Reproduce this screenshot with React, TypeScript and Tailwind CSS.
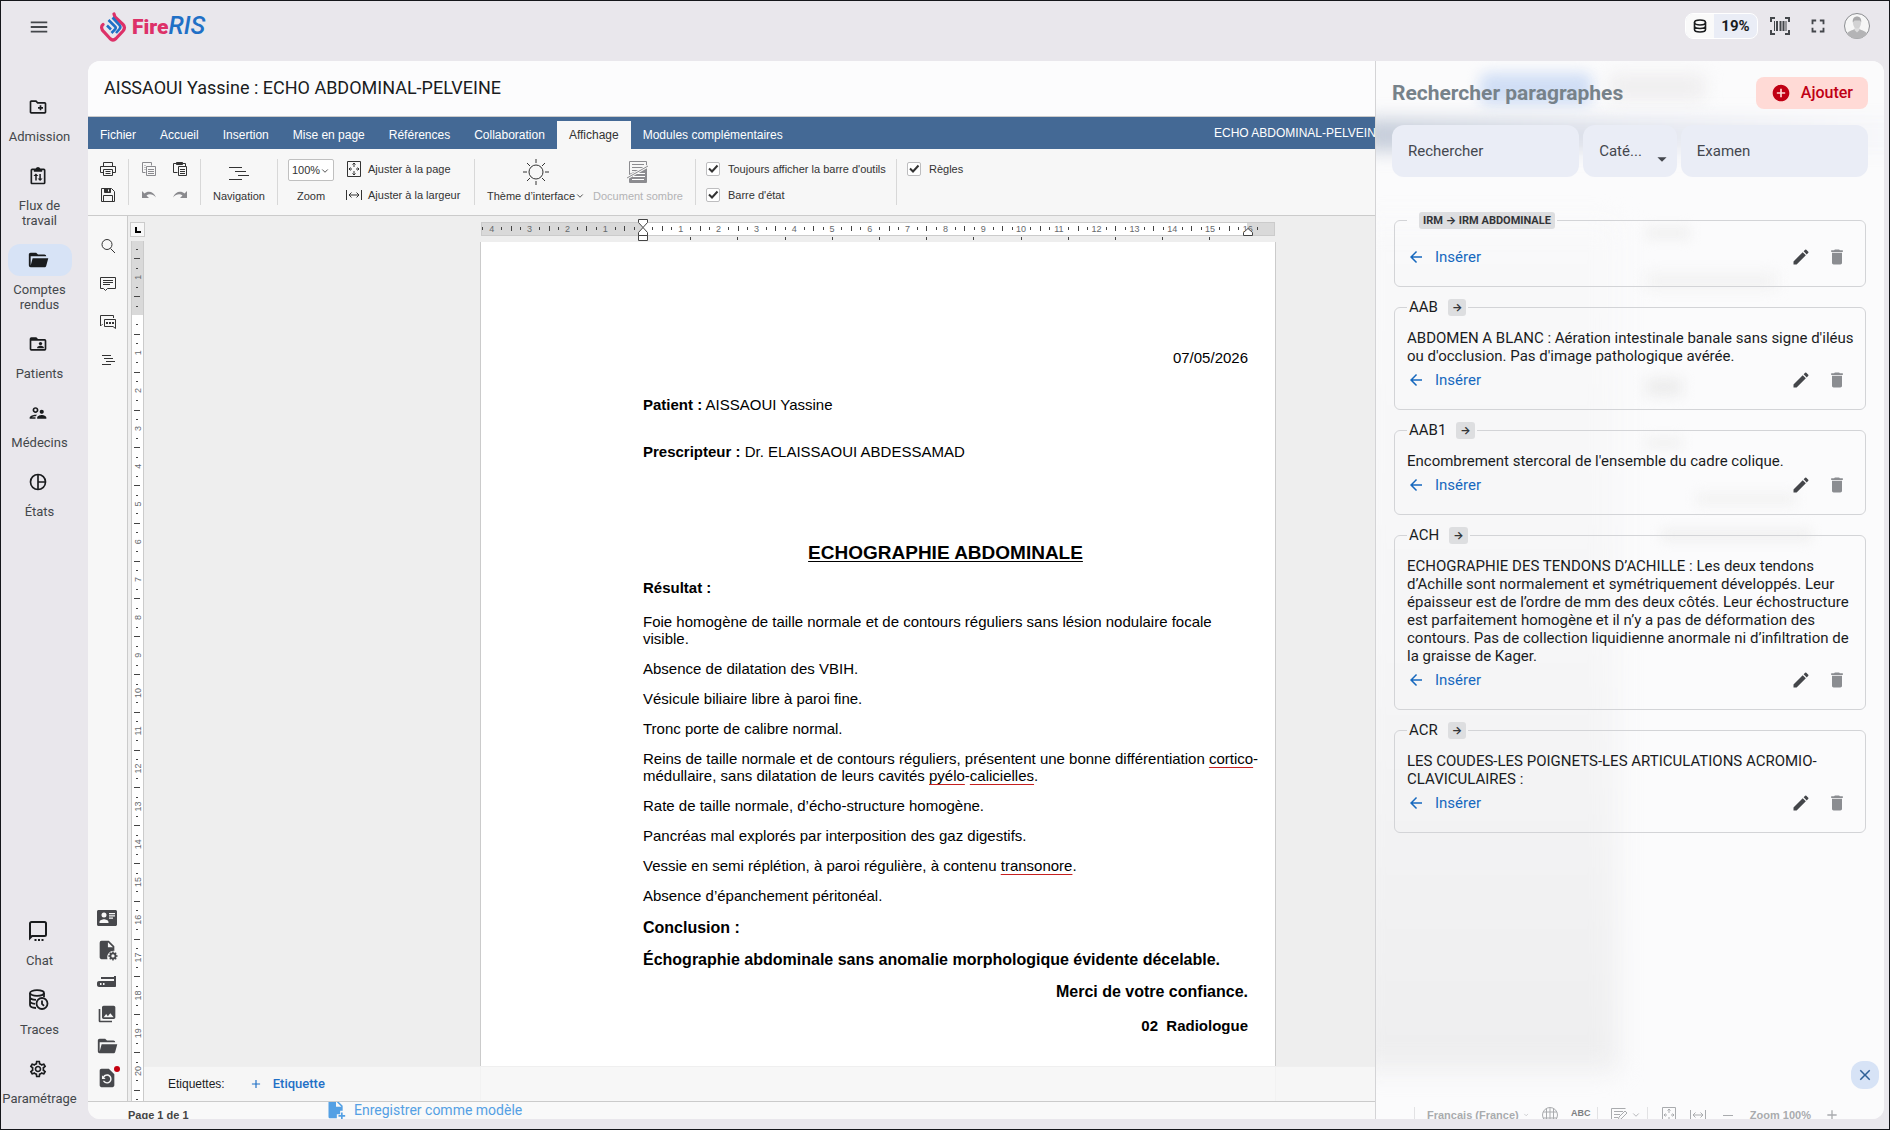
import type { ReactNode } from 'react';
import {
  MdAdd,
  MdAddCircle,
  MdArrowBack,
  MdArrowDropDown,
  MdClose,
  MdDelete,
  MdEdit,
  MdFullscreen,
  MdMenu,
  MdOutlineCreateNewFolder,
  MdOutlineSettings,
  MdOutlineSupervisorAccount,
  MdPhotoLibrary,
  MdRestorePage,
} from 'react-icons/md';
import { LuChevronDown } from 'react-icons/lu';

const CM = 37.8;

/* ---------- icons ---------- */

interface SvgProps {
  children: ReactNode;
  className?: string;
  viewBox?: string;
}

// thin line icons, drawn on whole pixels
function Line({ children, className = 'size-4', viewBox = '0 0 16 16' }: SvgProps) {
  return (
    <svg viewBox={viewBox} className={className} fill="none" stroke="currentColor" aria-hidden="true">
      {children}
    </svg>
  );
}

function Solid({ children, className = 'size-5', viewBox = '0 0 24 24' }: SvgProps) {
  return (
    <svg viewBox={viewBox} className={className} fill="currentColor" aria-hidden="true">
      {children}
    </svg>
  );
}

const ClipboardFlow = () => (
  <Solid>
    <path d="M19 3h-4.2a3 3 0 0 0-5.6 0H5a2 2 0 0 0-2 2v15c0 1.100.9 2 2 2h14a2 2 0 0 0 2-2V5a2 2 0 0 0-2-2zm0 17H5V5h2v2h10V5h2z" />
    <path d="M9.500 9L6.500 12h2.200v5.500h1.800V12h2zM14.500 18l3-3h-2.100V9.500h-1.800V15h-2.100z" />
  </Solid>
);

const FolderOpenFilled = () => (
  <Solid className="size-[22px]">
    <path d="M19 20H4a2 2 0 0 1-2-2V6c0-1.110.890-2 2-2h6l2 2h7a2 2 0 0 1 2 2H4v10l2.140-8h17.070l-2.280 8.500c-.23.870-1.010 1.500-1.930 1.500z" />
  </Solid>
);

const FolderPerson = () => (
  <Solid>
    <path d="M20 6h-8l-2-2H4a2 2 0 0 0-2 2v12a2 2 0 0 0 2 2h16a2 2 0 0 0 2-2V8a2 2 0 0 0-2-2zm0 12H4V8h16z" />
    <circle cx="15" cy="11.500" r="2" />
    <path d="M11 17v-1c0-1.300 2.700-2 4-2s4 .7 4 2v1z" />
  </Solid>
);

const PieOutline = () => (
  <Line viewBox="0 0 24 24" className="size-5">
    <g strokeWidth="2">
      <circle cx="12" cy="12" r="9" />
      <path d="M12 3v18M12 12h9" />
    </g>
  </Line>
);

const ChatDots = () => (
  <Line viewBox="0 0 24 24" className="size-6">
    <path d="M4 19V4.500C4 3.700 4.700 3 5.500 3h13c.8 0 1.500.7 1.500 1.500v11c0 .8-.7 1.500-1.500 1.500H6z" strokeWidth="2" />
    <path d="M8.500 21h2M12 21h2M15.500 21h2" strokeWidth="2" />
  </Line>
);

const DatabaseClock = () => (
  <Line viewBox="0 0 24 24" className="size-6">
    <g strokeWidth="1.800">
      <ellipse cx="11" cy="5" rx="7" ry="2.800" />
      <path d="M4 5v12c0 1.500 2.500 2.800 6 3M18 5v4M4 9c0 1.500 2.500 2.700 6 2.900M4 13c0 1.500 2 2.500 5 2.800" />
      <circle cx="16" cy="15.500" r="5.500" />
      <path d="M16 12.500v3.300l2 2" />
    </g>
  </Line>
);

const Database = () => (
  <Line className="size-4">
    <g strokeWidth="1.600">
      <ellipse cx="8" cy="4.500" rx="5.500" ry="2.500" />
      <path d="M2.500 4.500v7c0 1.400 2.500 2.500 5.500 2.500s5.500-1.100 5.500-2.500v-7M2.500 8c0 1.400 2.500 2.500 5.500 2.500s5.500-1.100 5.500-2.500" />
    </g>
  </Line>
);

const BarcodeScan = () => (
  <Line viewBox="0 0 20 18" className="h-[18px] w-5">
    <path d="M1 5V1h4M15 1h4v4M19 13v4h-4M5 17H1v-4" strokeWidth="2" />
    <path d="M4.500 4v10M16 4v10" strokeWidth="1" />
    <path d="M7 4v10M10.500 4v10M13.500 4v10" strokeWidth="2" />
  </Line>
);

const ContactCard = () => (
  <Solid viewBox="0 0 20 16" className="h-4 w-5">
    <path
      fillRule="evenodd"
      d="M1.500 0h17C19.300 0 20 .7 20 1.500v13c0 .8-.7 1.500-1.500 1.500h-17C.7 16 0 15.300 0 14.500v-13C0 .7.7 0 1.500 0zM7 2.500a2.500 2.500 0 1 0 0 5 2.500 2.500 0 0 0 0-5zM2.500 13h9v-1c0-1.800-3-2.800-4.500-2.800S2.500 10.200 2.500 12zM12 3v1.200h6V3zm0 2.300v1.200h6V5.300zm0 2.300v1.200h4V7.600z"
    />
  </Solid>
);

const FileGear = () => (
  <Solid className="size-[22px]">
    <path d="M6 2a2 2 0 0 0-2 2v16c0 1.100.9 2 2 2h6.500a7 7 0 0 1 7.500-9V8l-6-6zm7 1.500L18.500 9H13z" />
    <circle cx="18.500" cy="18.500" r="2.800" fill="none" stroke="currentColor" strokeWidth="2" />
    <path
      d="M18.500 13.500v2M18.500 21.500v2M13.500 18.500h2M21.500 18.500h2M15 15l1.400 1.400M20.600 20.600L22 22M15 22l1.400-1.400M20.600 16.400L22 15"
      stroke="currentColor"
      strokeWidth="1.600"
    />
  </Solid>
);

const ScannerIcon = () => (
  <Solid viewBox="0 0 20 12" className="h-3 w-5">
    <path
      fillRule="evenodd"
      d="M4 1h13V0h2v10c0 .6-.4 1-1 1H2c-1 0-2-.8-2-2V7c0-1.100.9-2 2-2h15V3H4zM3 7v2h1.500V7zm3 0v2h1.500V7z"
    />
  </Solid>
);

const FilePlus = () => (
  <Solid className="size-5">
    <path d="M5 0a2 2 0 0 0-2 2v18c0 1.100.9 2 2 2h8v-5h4v-4h3V7l-7-7zm7 1.500L18.500 8H12z" />
    <path d="M19 15v8M15 19h8" stroke="currentColor" strokeWidth="2" />
  </Solid>
);

const Printer = () => (
  <Line>
    <path d="M3.500 5V1.500h9V5M3.500 11.500h-3v-6h15v6h-3M3.500 8.500h9v6h-9zM5.500 10.500h5M5.500 12.500h5" />
  </Line>
);

const Floppy = () => (
  <Line className="size-[14px]" viewBox="0 0 14 14">
    <path d="M.5.5h10l3 3v10H.5zM2.500 13V7.500h9V13" />
    <path d="M3.500.5h6v4h-6z" fill="currentColor" />
    <path d="M7.500 1.500v2" stroke="#fff" />
  </Line>
);

const CopyIcon = () => (
  <Line>
    <path d="M4.500 11.500h-3v-10h9v3M3.500 4.500h1M3.500 6.500h1M3.500 8.500h1M5.500 5.500h9v9h-9zM7 8.500h6M7 10.500h6M7 12.500h6" />
  </Line>
);

const PasteIcon = () => (
  <Line>
    <path d="M5.500 11.500h-4v-9h12v3M6.500 5.500h8v9h-8zM8 8.500h5M8 10.500h5M8 12.500h5" />
    <path d="M4.500 1.500h6v2h-6z" fill="currentColor" />
  </Line>
);

const UndoIcon = ({ className = 'size-4' }: { className?: string }) => (
  <Solid viewBox="0 0 16 16" className={className}>
    <path d="M1 4v7h7L5.500 8.500C8 6.500 12 7 15 10.500 13 4.500 7 3 3.500 6.500z" />
  </Solid>
);

const NavLines = ({ className = 'h-[15px] w-5' }: { className?: string }) => (
  <Line viewBox="0 0 20 15" className={className}>
    <path d="M0 1.500h13M6 5.500h11M9 9.500h11M0 13.500h13" />
  </Line>
);

const TitlesIcon = () => (
  <Line>
    <path d="M2 3.500h9M4 6.500h9M6 9.500h9M2 12.500h9" />
  </Line>
);

const FitPage = () => (
  <Line>
    <path d="M1.500.5h13v15h-13zM8 2v4M8 10v4M3 8h3M10 8h3M6.500 3.500L8 2l1.500 1.500M6.500 12.500L8 14l1.500-1.500M4.500 6.500L3 8l1.500 1.500M11.500 6.500L13 8l-1.500 1.500" />
  </Line>
);

const FitWidth = () => (
  <Line>
    <path d="M.5 3v10M15.500 3v10M3 8h10M5.500 5.500L3 8l2.500 2.500M10.500 5.500L13 8l-2.500 2.500" />
  </Line>
);

const Sun = () => (
  <Line viewBox="0 0 26 26" className="size-[26px]">
    <circle cx="13" cy="13" r="7" />
    <path d="M13 0v4M13 22v4M0 13h4M22 13h4M4 4l3 3M19 19l3 3M4 22l3-3M19 7l3-3" />
  </Line>
);

const DarkDoc = () => (
  <Line viewBox="0 0 22 22" className="size-[22px]">
    <path d="M2 21V13L20 6v15z" fill="currentColor" stroke="none" />
    <path d="M2.500.5h17v21h-17zM5 3.500h12M5 6.500h12M5 9.500h8" />
    <path d="M10 12.500h8M6 15.500h12M5 18.500h12" stroke="#fff" />
    <path d="M0 17L21 5" stroke="#f7f7f7" strokeWidth="3" />
    <path d="M0 17L21 5" />
  </Line>
);

const SearchIcon = () => (
  <Line>
    <circle cx="7" cy="6.500" r="5" />
    <path d="M10.500 10.500l4.500 4.500" />
  </Line>
);

const CommentIcon = () => (
  <Line>
    <path d="M.5 1.500h15v11h-8l-2 2-2-2h-3zM3 4.500h10M3 6.500h10M3 8.500h7" />
  </Line>
);

const ChatIcon = () => (
  <Line>
    <path d="M2.500 10.500H2l-1.500 1.500V1.500h13V4M4.500 5.500h11v9L13 12.500H4.500z" />
    <path d="M6 9h2M9 9h2M12 9h2" strokeWidth="2" />
  </Line>
);

function Logo() {
  return (
    <div className="flex items-center gap-[5px]" aria-label="FireRIS">
      <svg viewBox="0 0 27 30" className="h-[30px] w-[27px]" fill="none" aria-hidden="true">
        <path
          d="M14 2l1 3 8 7.500c2 2 2 4 0 6.500l-7 7.500c-2 2-4 2-6 0l-6-6.500c-3-2.500-3-6-1-7.500"
          stroke="#dd3168"
          strokeWidth="3.200"
          strokeLinecap="round"
        />
        <path
          d="M12.500 5.500L19.500 13c1.300 1.500 1.300 2.500 0 4l-3.500 4M8.500 8L15 14.500c1 1 1 1.700.2 2.700L11.500 21M7 13.500l4 4"
          stroke="#1f70c6"
          strokeWidth="2.600"
        />
      </svg>
      <span className="flex items-baseline leading-[30px]">
        <span className="text-[21px] font-black text-[#dd3168]">Fire</span>
        <span className="text-[25px] font-medium text-[#1f70c6] italic">RIS</span>
      </span>
    </div>
  );
}

/* ---------- application shell ---------- */

interface NavItemProps {
  icon: ReactNode;
  label: string;
  active?: boolean;
}

function NavItem({ icon, label, active }: NavItemProps) {
  return (
    <a href="#" className="flex w-[77px] flex-col items-center gap-1.5">
      <span
        className={`flex h-8 w-16 items-center justify-center rounded-xl pr-1 text-xl text-[#1a1c1e] ${active ? 'bg-[#d7e3f6]' : ''}`}
      >
        {icon}
      </span>
      <span className="text-center text-[13px] leading-[15px] text-[#44474b]">{label}</span>
    </a>
  );
}

function Sidebar() {
  return (
    <nav className="flex w-[87px] shrink-0 flex-col justify-between pt-[30px] pb-2">
      <div className="flex flex-col gap-4">
        <NavItem icon={<MdOutlineCreateNewFolder />} label="Admission" />
        <NavItem icon={<ClipboardFlow />} label="Flux de travail" />
        <NavItem icon={<FolderOpenFilled />} label="Comptes rendus" active />
        <NavItem icon={<FolderPerson />} label="Patients" />
        <NavItem icon={<MdOutlineSupervisorAccount />} label="Médecins" />
        <NavItem icon={<PieOutline />} label="États" />
      </div>
      <div className="flex flex-col gap-4 pb-[15px]">
        <NavItem icon={<ChatDots />} label="Chat" />
        <NavItem icon={<DatabaseClock />} label="Traces" />
        <NavItem icon={<MdOutlineSettings />} label="Paramétrage" />
      </div>
    </nav>
  );
}

function Header() {
  return (
    <header className="flex h-[60px] shrink-0 items-start justify-between pr-[19px] pl-[27px]">
      <div className="flex items-center gap-[50px] pt-2.5">
        <button type="button" aria-label="Menu" className="text-[22px] text-[#44474b]">
          <MdMenu />
        </button>
        <Logo />
      </div>
      <div className="flex items-center pt-3 text-[#44474b]">
        <div className="flex h-[26px] overflow-hidden rounded-lg border border-white bg-[#eaedf6]">
          <span className="flex w-7 items-center justify-center bg-[#fafafa] text-[#1a1c1e]">
            <Database />
          </span>
          <span className="flex w-[43px] items-center justify-center text-[15px] font-bold text-[#1a1c1e]">19%</span>
        </div>
        <button type="button" aria-label="Scanner un code" className="ml-3">
          <BarcodeScan />
        </button>
        <button type="button" aria-label="Plein écran" className="ml-[17px] text-[22px]">
          <MdFullscreen />
        </button>
        <button type="button" aria-label="Profil" className="ml-[15px]">
          <svg viewBox="0 0 26 26" className="size-[26px]" aria-hidden="true">
            <circle cx="13" cy="13" r="12.500" fill="#f6f6f6" stroke="#8b8d90" />
            <path d="M3 20.500c2-3 5.500-3 7.500-4.500h5c2 1.500 5.500 1.500 7.500 4.500a12 12 0 0 1-20 0z" fill="#b4b4b6" />
            <path d="M10.500 14h5v3L13 19.500 10.500 17z" fill="#dcdcdd" />
            <ellipse cx="13" cy="10" rx="4" ry="5.500" fill="#d2d2d3" />
            <path d="M8.800 9.500c-.5-4 1.500-6 4.200-6s4.700 2 4.200 6L16 7.500h-5.500z" fill="#a9a9ab" />
          </svg>
        </button>
      </div>
    </header>
  );
}

/* ---------- editor ---------- */

const tabs = ['Fichier', 'Accueil', 'Insertion', 'Mise en page', 'Références', 'Collaboration', 'Affichage', 'Modules complémentaires'];

function TabBar() {
  return (
    <div className="flex h-8 shrink-0 items-end justify-between bg-[#446995] text-xs text-white">
      <div role="tablist" className="flex">
        {tabs.map((tab) => (
          <button
            key={tab}
            type="button"
            role="tab"
            aria-selected={tab === 'Affichage'}
            className={`h-7 px-3 whitespace-nowrap ${tab === 'Affichage' ? 'bg-[#f7f7f7] text-[#333]' : ''}`}
          >
            {tab}
          </button>
        ))}
      </div>
      <div className="h-6 w-[161px] overflow-hidden whitespace-nowrap">ECHO ABDOMINAL-PELVEINE</div>
    </div>
  );
}

function Group({ children, className = '' }: { children: ReactNode; className?: string }) {
  return (
    <div className="flex pt-2.5">
      <div className={`flex h-[46px] ${className}`}>{children}</div>
      <div className="h-[46px] w-px bg-[#d8d8d8]" />
    </div>
  );
}

function ToolStack({ children, className = 'items-center' }: { children: ReactNode; className?: string }) {
  return <div className={`flex flex-col justify-between ${className}`}>{children}</div>;
}

function Tool({ label, children, muted }: { label: string; children: ReactNode; muted?: boolean }) {
  return (
    <button type="button" aria-label={label} className={`flex h-5 items-center ${muted ? 'text-[#8a8a8e]' : ''}`}>
      {children}
    </button>
  );
}

function Check({ id, label }: { id: string; label: string }) {
  return (
    <label htmlFor={id} className="flex h-5 items-center gap-2 whitespace-nowrap">
      <span className="grid size-[14px] place-items-center rounded-xs border border-[#bdbdbf] bg-white">
        <input id={id} type="checkbox" defaultChecked className="peer col-start-1 row-start-1 size-3 appearance-none" />
        <svg viewBox="0 0 12 12" className="pointer-events-none invisible col-start-1 row-start-1 size-3 peer-checked:visible" aria-hidden="true">
          <path d="M2 5.500l3 3L10.500 2.500" fill="none" stroke="#333" strokeWidth="2" />
        </svg>
      </span>
      {label}
    </label>
  );
}

function Toolbar() {
  return (
    <div className="flex h-[67px] shrink-0 border-b border-[#cbcbcb] bg-[#f7f7f7] text-[11px] text-[#333]">
      <Group className="w-10 justify-center">
        <ToolStack>
          <Tool label="Imprimer">
            <Printer />
          </Tool>
          <Tool label="Enregistrer">
            <Floppy />
          </Tool>
        </ToolStack>
      </Group>
      <Group className="w-[71px] justify-center gap-[15px]">
        <ToolStack>
          <Tool label="Copier" muted>
            <CopyIcon />
          </Tool>
          <Tool label="Annuler" muted>
            <UndoIcon />
          </Tool>
        </ToolStack>
        <ToolStack>
          <Tool label="Coller">
            <PasteIcon />
          </Tool>
          <Tool label="Rétablir" muted>
            <UndoIcon className="size-4 -scale-x-100" />
          </Tool>
        </ToolStack>
      </Group>
      <Group className="w-[76px] justify-center">
        <button type="button" className="flex flex-col items-center justify-between pt-[7px] pb-px">
          <NavLines />
          <span className="leading-4">Navigation</span>
        </button>
      </Group>
      <Group className="w-[196px] gap-3 pl-2.5">
        <div className="flex flex-col items-center justify-between pb-px">
          <div className="relative flex">
            <select
              id="zoom"
              className="h-[22px] w-[46px] appearance-none rounded-xs border border-[#c0c0c0] bg-white pl-[3px] text-[11px]"
            >
              <option>100%</option>
            </select>
            <LuChevronDown className="pointer-events-none absolute top-[7px] right-1 size-2.5" />
          </div>
          <label htmlFor="zoom" className="leading-4">
            Zoom
          </label>
        </div>
        <ToolStack className="items-start">
          <button type="button" className="flex h-5 items-center gap-1.5 whitespace-nowrap">
            <FitPage />
            Ajuster à la page
          </button>
          <button type="button" className="flex h-5 items-center gap-1.5 whitespace-nowrap">
            <FitWidth />
            Ajuster à la largeur
          </button>
        </ToolStack>
      </Group>
      <Group className="w-[220px] gap-2 pl-3">
        <button type="button" className="flex flex-col items-center justify-between pb-px">
          <Sun />
          <span className="flex items-center leading-4 whitespace-nowrap">
            Thème d’interface
            <LuChevronDown className="size-2.5" />
          </span>
        </button>
        <button type="button" disabled className="flex flex-col items-center justify-between pt-0.5 pb-px text-[#8c8c90]">
          <DarkDoc />
          <span className="leading-4 whitespace-nowrap text-[#b3b3b5]">Document sombre</span>
        </button>
      </Group>
      <Group className="w-[200px] pl-2.5">
        <ToolStack className="items-start">
          <Check id="always-toolbar" label="Toujours afficher la barre d'outils" />
          <Check id="status-bar" label="Barre d'état" />
        </ToolStack>
      </Group>
      <div className="pt-2.5 pl-2.5">
        <Check id="rulers" label="Règles" />
      </div>
    </div>
  );
}

function EditorRail() {
  return (
    <div className="flex w-10 shrink-0 flex-col justify-between border-r border-[#cbcbcb] bg-[#f7f7f7]">
      <div className="flex flex-col items-center gap-[22px] pt-[22px] text-[#333]">
        <button type="button" aria-label="Rechercher">
          <SearchIcon />
        </button>
        <button type="button" aria-label="Commentaires">
          <CommentIcon />
        </button>
        <button type="button" aria-label="Discussion">
          <ChatIcon />
        </button>
        <button type="button" aria-label="Titres">
          <TitlesIcon />
        </button>
      </div>
      <div className="flex flex-col items-center pr-0.5 pb-[7px] text-[#47484c] *:flex *:h-8 *:items-center">
        <button type="button" aria-label="Fiche patient">
          <ContactCard />
        </button>
        <button type="button" aria-label="Réglages du document">
          <FileGear />
        </button>
        <button type="button" aria-label="Numériser">
          <ScannerIcon />
        </button>
        <button type="button" aria-label="Images">
          <MdPhotoLibrary className="size-5" />
        </button>
        <button type="button" aria-label="Dossier">
          <FolderOpenFilled />
        </button>
        <button type="button" aria-label="Restaurer" className="relative">
          <MdRestorePage className="size-[22px]" />
          <span className="absolute top-1 -right-0.5 size-1.5 rounded-full bg-[#c5000f]" />
        </button>
      </div>
    </div>
  );
}

// quarter marks between two centimetre numbers, the half one is longer
const quarters = [1, 2, 3];

function HorizontalRuler() {
  const zero = 162;
  const cms = Array.from({ length: 21 }, (_, i) => i - 4);
  return (
    <svg className="ml-px h-[26px] w-[795px]" aria-hidden="true">
      <rect x="0.500" y="6.500" width="793" height="13" fill="#d9d9d9" stroke="#cbcbcb" />
      <rect x={zero} y="7" width="604" height="12" fill="#fff" />
      {cms.map((cm) => {
        const x = zero + cm * CM;
        return (
          <g key={cm}>
            {cm !== 0 && (
              <text x={x} y="16" textAnchor="middle" className="fill-[#66696d] text-[9px]">
                {Math.abs(cm)}
              </text>
            )}
            {quarters.map((q) => {
              const tx = Math.round(x + (q * CM) / 4);
              if (tx > 785) return null;
              const half = q === 2 ? 5 : 3;
              return <rect key={q} x={tx} y={13 - Math.ceil(half / 2)} width="1" height={half} fill="#444" />;
            })}
          </g>
        );
      })}
      <rect x="1" y="11" width="1" height="3" fill="#444" />
      {Array.from({ length: 12 }, (_, i) => (
        <rect key={i} x={Math.round(zero + (i + 1) * 47.2)} y="21" width="1" height="3" fill="#444" />
      ))}
      <path d="M157.500 3.500h9v3l-4.500 5-4.500-5zM157.500 19.500v-3l4.500-5 4.500 5v3zM157.500 19.500h9v5h-9z" fill="#fff" stroke="#444" />
      <path d="M762.500 19.500v-3l4.500-4 4.500 4v3z" fill="#fff" stroke="#444" />
    </svg>
  );
}

function VerticalRuler() {
  const zero = 74;
  const cms = Array.from({ length: 23 }, (_, i) => i - 2);
  return (
    <svg className="ml-[3px] min-h-0 w-[13px] flex-1" aria-hidden="true">
      <rect width="13" height="74" fill="#d9d9d9" />
      <rect y={zero} width="13" height="900" fill="#fff" />
      <path d="M.5 0v1000M12.500 0v1000" stroke="#cbcbcb" />
      {cms.map((cm) => {
        const y = zero + cm * CM;
        return (
          <g key={cm}>
            {cm !== 0 && cm !== -2 && (
              <text transform={`translate(10 ${y}) rotate(-90)`} textAnchor="middle" className="fill-[#66696d] text-[9px]">
                {Math.abs(cm)}
              </text>
            )}
            {quarters.map((q) => (
              <rect key={q} x={q === 2 ? 3 : 5} y={Math.round(y + (q * CM) / 4)} width={q === 2 ? 6 : 2} height="1" fill="#444" />
            ))}
          </g>
        );
      })}
    </svg>
  );
}

function Typo({ children }: { children: ReactNode }) {
  return <span className="underline decoration-[#c62020] decoration-1 underline-offset-[3px]">{children}</span>;
}

function ReportPage() {
  return (
    <article className="h-[1123px] w-[796px] border-x border-[#cbcbcb] bg-white pt-[107px] pr-[27px] pl-[162px] text-[15px] leading-[17px] whitespace-nowrap text-black">
      <p className="text-right">07/05/2026</p>
      <p className="mt-[30px]">
        <b>Patient :</b> AISSAOUI Yassine
      </p>
      <p className="mt-[30px]">
        <b>Prescripteur :</b> Dr. ELAISSAOUI ABDESSAMAD
      </p>
      <h2 className="mt-[82px] text-center text-[19px] leading-[22px] font-bold underline underline-offset-2">
        ECHOGRAPHIE ABDOMINALE
      </h2>
      <div className="mt-[15px] grid gap-[13px]">
        <p className="mb-1 font-bold">Résultat :</p>
        <p>
          Foie homogène de taille normale et de contours réguliers sans lésion nodulaire focale
          <br />
          visible.
        </p>
        <p>Absence de dilatation des VBIH.</p>
        <p>Vésicule biliaire libre à paroi fine.</p>
        <p>Tronc porte de calibre normal.</p>
        <p>
          Reins de taille normale et de contours réguliers, présentent une bonne différentiation <Typo>cortico</Typo>-
          <br />
          médullaire, sans dilatation de leurs cavités <Typo>pyélo</Typo>-<Typo>calicielles</Typo>.
        </p>
        <p>Rate de taille normale, d’écho-structure homogène.</p>
        <p>Pancréas mal explorés par interposition des gaz digestifs.</p>
        <p>
          Vessie en semi réplétion, à paroi régulière, à contenu <Typo>transonore</Typo>.
        </p>
        <p>Absence d’épanchement péritonéal.</p>
      </div>
      <div className="mt-[15px] grid gap-[14px] text-base leading-[18px] font-bold">
        <p>Conclusion :</p>
        <p>Échographie abdominale sans anomalie morphologique évidente décelable.</p>
        <p className="text-right">Merci de votre confiance.</p>
        <p className="pt-0.5 text-right text-[15px] leading-[18px]">02&nbsp; Radiologue</p>
      </div>
    </article>
  );
}

function Editor() {
  return (
    <section className="flex min-w-0 flex-1 flex-col overflow-hidden">
      <h1 className="flex h-14 shrink-0 items-center border-b border-[#cbcbcb] bg-[#fcfcfd] px-4 pb-0.5 text-lg text-[#1a1c1e]">
        AISSAOUI Yassine : ECHO ABDOMINAL-PELVEINE
      </h1>
      <div className="flex min-h-0 flex-1 flex-col font-['Liberation_Sans',Arial,sans-serif]">
        <TabBar />
        <Toolbar />
        <div className="relative flex min-h-0 flex-1 overflow-hidden bg-[#eeeeee]">
          <EditorRail />
          <div className="flex w-[17px] shrink-0 flex-col gap-1">
            <div className="mt-1.5 ml-0.5 flex size-[15px] shrink-0 items-center justify-center border border-[#cbcbcb] bg-[#f7f7f7]">
              <div className="size-1.5 border-b-2 border-l-2 border-black" />
            </div>
            <VerticalRuler />
          </div>
          <div className="ml-[335px] shrink-0">
            <HorizontalRuler />
            <ReportPage />
          </div>
          <div className="absolute right-0 bottom-0 left-14 flex h-[35px] items-center gap-6 border-t border-[#efefef] bg-[#f6f6f6]/90 pl-6 text-[#1a1c1e]">
            <span className="text-xs">Etiquettes:</span>
            <button type="button" className="flex items-center gap-2.5 font-['Roboto'] text-[13px] font-medium text-[#1f70c6]">
              <MdAdd className="size-[14px]" />
              Etiquette
            </button>
          </div>
        </div>
        <div className="flex h-[18px] shrink-0 items-start overflow-hidden border-t border-[#cbcbcb] bg-[#f9f9f9] pl-10">
          <span className="w-[198px] pt-[5px] text-[11px] leading-4 font-bold text-[#444]">Page 1 de 1</span>
          <button type="button" className="flex h-4 items-center gap-2 font-['Roboto'] text-sm whitespace-nowrap text-[#54a0e4]">
            <FilePlus />
            Enregistrer comme modèle
          </button>
        </div>
      </div>
    </section>
  );
}

/* ---------- paragraph search ---------- */

interface Paragraph {
  code?: string;
  path: string;
  text?: string;
}

const paragraphs: Paragraph[] = [
  { path: 'IRM → IRM ABDOMINALE' },
  {
    code: 'AAB',
    path: '→',
    text: "ABDOMEN A BLANC : Aération intestinale banale sans signe d'iléus ou d'occlusion. Pas d'image pathologique avérée.",
  },
  { code: 'AAB1', path: '→', text: "Encombrement stercoral de l'ensemble du cadre colique." },
  {
    code: 'ACH',
    path: '→',
    text: 'ECHOGRAPHIE DES TENDONS D’ACHILLE : Les deux tendons d’Achille sont normalement et symétriquement développés. Leur épaisseur est de l’ordre de mm des deux côtés. Leur échostructure est parfaitement homogène et il n’y a pas de déformation des contours. Pas de collection liquidienne anormale ni d’infiltration de la graisse de Kager.',
  },
  { code: 'ACR', path: '→', text: 'LES COUDES-LES POIGNETS-LES ARTICULATIONS ACROMIO-CLAVICULAIRES :' },
];

function ParagraphCard({ code, path, text }: Paragraph) {
  return (
    <fieldset className="rounded-md border border-[#d3d4d7] pr-2 pb-3 pl-3">
      <legend className="flex h-[18px] items-center gap-2.5 px-0.5 text-[15px] text-[#1a1c1e]">
        <span>{code}</span>
        <span className="rounded-[3px] bg-[#dddee0] px-1 font-['Roboto','Inter'] text-[11px] leading-[17px] font-bold text-[#333538]">
          {path}
        </span>
      </legend>
      <div className="pt-[13px]">
        {text && <p className="text-[15px] leading-[18px] text-[#1a1c1e]">{text}</p>}
        <div className="flex h-8 items-center justify-between pr-2.5 pb-0.5">
          <button type="button" className="flex items-center gap-2.5 text-[15px] text-[#1668be]">
            <MdArrowBack className="size-[18px]" />
            Insérer
          </button>
          <div className="flex gap-4 text-xl">
            <button type="button" aria-label="Modifier" className="text-[#44464a]">
              <MdEdit />
            </button>
            <button type="button" aria-label="Supprimer" className="text-[#8b8d91]">
              <MdDelete />
            </button>
          </div>
        </div>
      </div>
    </fieldset>
  );
}

// what shows through the frosted panel
function Frost() {
  return (
    <div className="pointer-events-none absolute inset-0 overflow-hidden" aria-hidden="true">
      <div className="absolute top-40 bottom-12 -left-5 w-[262px] bg-linear-to-b from-[#f9f9fa] via-[#f6f6f7] to-[#eeeeef] blur-[12px]" />
      <div className="absolute top-3 left-[104px] h-8 w-[112px] rounded-lg bg-[#d0def5] blur-[7px]" />
      <div className="absolute top-3 left-[232px] h-7 w-[98px] rounded-lg bg-[#f0eff0] blur-[8px]" />
      <div className="absolute top-[58px] -left-3 h-8 w-[560px] bg-linear-to-r from-[#c3cbd8] via-[#e2e5ee] to-[#fafafc] blur-[9px]" />
      <div className="absolute top-[166px] left-[270px] h-3 w-11 bg-[#f0f0f0] blur-[6px]" />
      <div className="absolute top-[212px] left-[270px] h-4 w-[130px] bg-[#f2f2f2] blur-[7px]" />
      <div className="absolute top-[318px] left-[270px] h-4 w-9 bg-[#ebebeb] blur-[7px]" />
      <div className="absolute top-[376px] left-[270px] h-3 w-9 bg-[#f1f1f1] blur-[6px]" />
      <div className="absolute top-[432px] left-[320px] h-3 w-[100px] bg-[#f2f2f2] blur-[6px]" />
      <div className="absolute top-[468px] left-[285px] h-3 w-[150px] bg-[#f0f0f0] blur-[6px]" />
    </div>
  );
}

function ParagraphPanel() {
  return (
    <aside className="relative flex w-[509px] shrink-0 flex-col overflow-hidden border-l border-[#d4d4d6] bg-[#fbfbfc]">
      <Frost />
      <div className="relative flex flex-1 flex-col px-4 pt-4">
        <div className="flex items-center justify-between">
          <h2 className="text-[21px] leading-8 font-bold text-[#77828a]">Rechercher paragraphes</h2>
          <button type="button" className="flex h-8 items-center gap-2.5 rounded-lg bg-[#ffdad6] px-[15px] text-base font-medium text-[#c00014]">
            <MdAddCircle className="size-5" />
            Ajouter
          </button>
        </div>
        <div className="mt-4 grid h-[52px] grid-cols-[2fr_1fr_2fr] gap-1 text-[15px] text-[#44474e]">
          <input
            type="text"
            aria-label="Rechercher"
            placeholder="Rechercher"
            className="min-w-0 rounded-xl bg-[#eaedf6] px-4 placeholder:text-[#44474e]"
          />
          <div className="relative min-w-0">
            <select aria-label="Catégorie" className="size-full appearance-none rounded-xl bg-[#eaedf6] pl-4">
              <option>Caté...</option>
            </select>
            <MdArrowDropDown className="pointer-events-none absolute top-[23px] right-1 size-[22px]" />
          </div>
          <input
            type="text"
            aria-label="Examen"
            placeholder="Examen"
            className="min-w-0 rounded-xl bg-[#eaedf6] px-4 placeholder:text-[#44474e]"
          />
        </div>
        <div className="mt-[34px] grid gap-[11px] px-0.5">
          {paragraphs.map((p) => (
            <ParagraphCard key={p.code ?? p.path} {...p} />
          ))}
        </div>
      </div>
      <div className="relative flex h-3 items-start gap-[13px] overflow-hidden pl-[38px] font-['Liberation_Sans'] text-[11px] leading-4 font-bold whitespace-nowrap text-[#a9abae] *:shrink-0">
        <span className="flex h-4 w-[115px] items-center gap-1 border-l border-[#e2e2e4] pl-3">
          Français (France)
          <LuChevronDown className="size-2.5" />
        </span>
        <Line>
          <path d="M.5 8a7.500 7.500 0 0 1 15 0 7.500 7.500 0 0 1-15 0zM4.500 2v12M8 .5v15M11.500 2v12M1 5h14M1 11h14" />
        </Line>
        <span className="flex h-4 w-[27px] items-start border-r border-[#e2e2e4] text-[9px] leading-3 text-[#7d7f82]">ABC</span>
        <span className="flex h-4 w-[37px] items-center gap-1 border-r border-[#e2e2e4]">
          <Line>
            <path d="M.5 15V1.500h14M3 4.500h9M3 7.500h6M3 10.500h4M7 14l1-4 6-6 2 2-6 6z" />
          </Line>
          <LuChevronDown className="size-2.5" />
        </span>
        <FitPage />
        <FitWidth />
        <span className="ml-1 flex h-4 w-[88px] items-center justify-between">
          <span className="h-px w-2.5 bg-[#a9abae]" />
          <span>Zoom 100%</span>
        </span>
        <MdAdd className="size-4" />
      </div>
      <button
        type="button"
        aria-label="Fermer"
        className="absolute right-[5px] bottom-[30px] flex size-7 items-center justify-center rounded-xl bg-[#d7e3f6] text-lg text-[#2f6097]"
      >
        <MdClose />
      </button>
    </aside>
  );
}

export default function App() {
  return (
    <div className="flex h-screen flex-col overflow-hidden border border-[#15161a] bg-[#e9e7ec] font-['Roboto',sans-serif]">
      <Header />
      <div className="flex min-h-0 flex-1">
        <Sidebar />
        <main className="mr-[5px] mb-2.5 flex min-w-0 flex-1 overflow-hidden rounded-xl bg-[#fbfbfc]">
          <Editor />
          <ParagraphPanel />
        </main>
      </div>
    </div>
  );
}
